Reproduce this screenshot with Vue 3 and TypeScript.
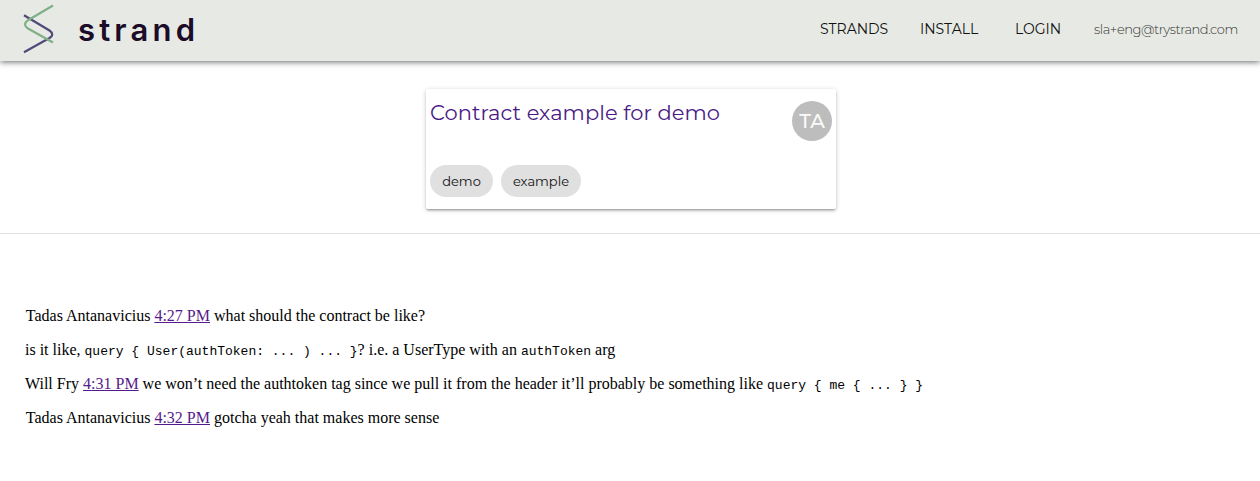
<script setup lang="ts">
interface Part {
  kind: 'text' | 'link' | 'code'
  value: string
}

const tags: string[] = ['demo', 'example']

const messages: Part[][] = [
  [
    { kind: 'text', value: 'Tadas Antanavicius ' },
    { kind: 'link', value: '4:27 PM' },
    { kind: 'text', value: ' what should the contract be like?' },
  ],
  [
    { kind: 'text', value: 'is it like, ' },
    { kind: 'code', value: 'query { User(authToken: ... ) ... }' },
    { kind: 'text', value: '? i.e. a UserType with an ' },
    { kind: 'code', value: 'authToken' },
    { kind: 'text', value: ' arg' },
  ],
  [
    { kind: 'text', value: 'Will Fry ' },
    { kind: 'link', value: '4:31 PM' },
    { kind: 'text', value: ' we won’t need the authtoken tag since we pull it from the header it’ll probably be something like ' },
    { kind: 'code', value: 'query { me { ... } }' },
  ],
  [
    { kind: 'text', value: 'Tadas Antanavicius ' },
    { kind: 'link', value: '4:32 PM' },
    { kind: 'text', value: ' gotcha yeah that makes more sense' },
  ],
]
</script>

<template>
  <div class="page">
    <header class="bar">
      <div class="brand">
        <svg class="mark" width="32" height="52" viewBox="0 0 32 52" fill="none" stroke-width="2.2">
          <path d="M1 12.3 L26.5 27.5 Q32 31.5 26.5 35 L1 49.3" stroke="#4f4a7a" />
          <path d="M30 2.5 L5 17.2 Q-1 21.5 5 25.5 L30 39.5" stroke="#80b088" />
        </svg>
        <span class="word">strand</span>
      </div>
      <nav class="nav">
        <a class="item strands">STRANDS</a>
        <a class="item install">INSTALL</a>
        <a class="item login">LOGIN</a>
        <span class="email">sla+eng@trystrand.com</span>
      </nav>
    </header>

    <section class="summary">
      <article class="card">
        <div class="top">
          <a class="title">Contract example for demo</a>
          <div class="avatar">TA</div>
        </div>
        <div class="tags">
          <span v-for="tag in tags" :key="tag" class="tag" :class="tag">{{ tag }}</span>
        </div>
      </article>
    </section>

    <main class="thread">
      <p v-for="(parts, i) in messages" :key="i">
        <template v-for="(part, j) in parts" :key="j">
          <a v-if="part.kind === 'link'" href="#">{{ part.value }}</a>
          <code v-else-if="part.kind === 'code'">{{ part.value }}</code>
          <template v-else>{{ part.value }}</template>
        </template>
      </p>
    </main>
  </div>
</template>

<style>
body {
  margin: 0;
  background: #fff;
}
</style>

<style scoped>
.page {
  height: 481px;
  overflow: hidden;
  font-family: Montserrat, Inter, sans-serif;
}
.bar {
  box-sizing: border-box;
  height: 61px;
  display: flex;
  justify-content: space-between;
  background: #e7eae4;
  box-shadow: 0 1px 6px rgba(0, 0, 0, 0.6);
}
.brand {
  display: flex;
  padding: 3px 0 0 23px;
}
.mark {
  display: block;
}
.word {
  margin-left: 23px;
  font-family: Inter, sans-serif;
  font-size: 31px;
  line-height: 54px;
  font-weight: 600;
  letter-spacing: 4.2px;
  color: #1c0c28;
}
.nav {
  display: flex;
  line-height: 58px;
  white-space: nowrap;
}
.item {
  font-size: 14px;
  color: #111;
}
.strands {
  width: 100px;
}
.install {
  width: 95px;
}
.login {
  width: 79px;
}
.email {
  width: 166px;
  font-size: 13px;
  font-weight: 300;
  letter-spacing: -0.44px;
  color: #333;
}
.summary {
  box-sizing: border-box;
  height: 173px;
  padding: 28px 0 0 426px;
  border-bottom: 1px solid #e0e0e0;
}
.card {
  box-sizing: border-box;
  width: 410px;
  height: 120px;
  padding: 12px 4px;
  border-radius: 2px;
  background: #fff;
  box-shadow: 0 1px 5px rgba(0, 0, 0, 0.2), 0 2px 2px rgba(0, 0, 0, 0.14), 0 3px 1px -2px rgba(0, 0, 0, 0.12);
}
.top {
  height: 64px;
  display: flex;
  justify-content: space-between;
}
.title {
  font-size: 21px;
  line-height: 24px;
  letter-spacing: 0.05px;
  color: #4b1a84;
  white-space: nowrap;
}
.avatar {
  width: 40px;
  height: 40px;
  border-radius: 50%;
  background: #bdbdbd;
  color: #fafafa;
  font-size: 20px;
  font-weight: 500;
  line-height: 40px;
  text-align: center;
}
.tags {
  display: flex;
  gap: 8px;
}
.tag {
  height: 32px;
  border-radius: 16px;
  background: #e0e0e0;
  color: #111;
  font-size: 13px;
  line-height: 32px;
  text-align: center;
}
.demo {
  width: 63px;
}
.example {
  width: 80px;
}
.thread {
  padding: 73px 25px 0;
  font-family: "Liberation Serif", "Times New Roman", serif;
  font-size: 16px;
  line-height: 18px;
  color: #000;
}
.thread p {
  height: 18px;
  margin: 0 0 16px;
  white-space: pre-wrap;
}
.thread p:first-child,
.thread p:last-child {
  padding-left: 0.8px;
}
.thread a {
  color: #551a8b;
}
.thread code {
  font-family: "Liberation Mono", "Courier New", monospace;
  font-size: 13px;
}
</style>
